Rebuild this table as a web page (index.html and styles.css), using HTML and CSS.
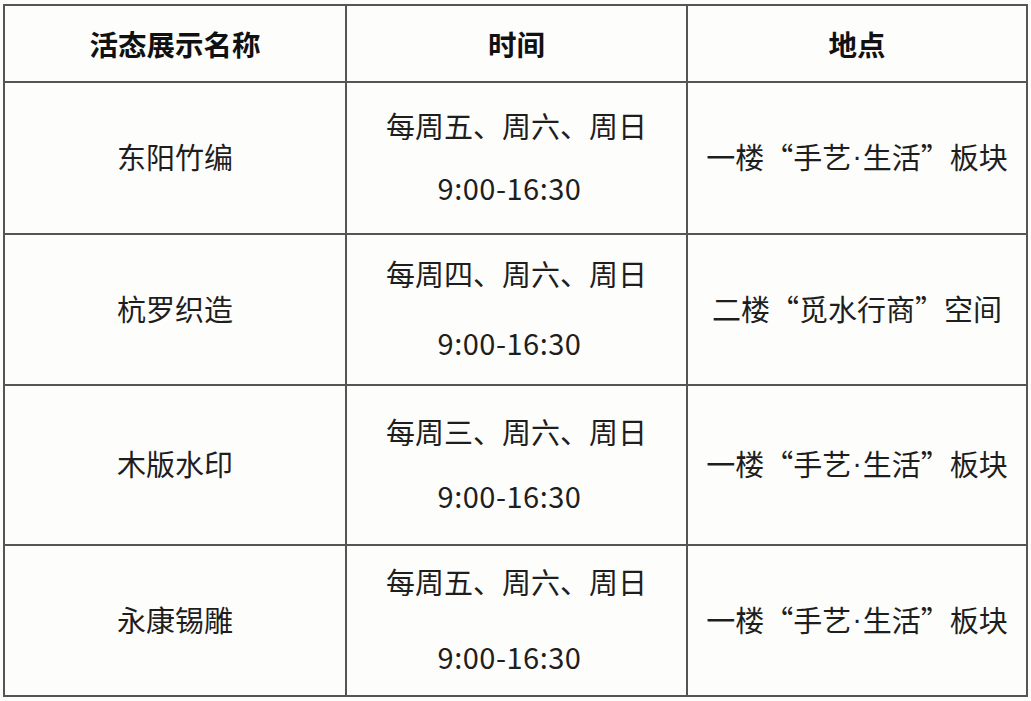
FILE: index.html
```html
<!DOCTYPE html>
<html lang="zh-CN">
<head>
<meta charset="utf-8">
<title>活态展示</title>
<link rel="stylesheet" href="styles.css">
</head>
<body>
<div class="table">
  <div class="cell head">活态展示名称</div>
  <div class="cell head">时间</div>
  <div class="cell head">地点</div>

  <div class="cell">东阳竹编</div>
  <div class="cell time gap-a"><span>每周五、周六、周日</span><span class="hours">9:00-16:30</span></div>
  <div class="cell">一楼“手艺<span class="dot">·</span>生活”板块</div>

  <div class="cell">杭罗织造</div>
  <div class="cell time gap-b"><span>每周四、周六、周日</span><span class="hours">9:00-16:30</span></div>
  <div class="cell">二楼“觅水行商”空间</div>

  <div class="cell">木版水印</div>
  <div class="cell time gap-c"><span>每周三、周六、周日</span><span class="hours">9:00-16:30</span></div>
  <div class="cell">一楼“手艺<span class="dot">·</span>生活”板块</div>

  <div class="cell">永康锡雕</div>
  <div class="cell time gap-d"><span>每周五、周六、周日</span><span class="hours">9:00-16:30</span></div>
  <div class="cell">一楼“手艺<span class="dot">·</span>生活”板块</div>
</div>
</body>
</html>
```

FILE: styles.css
```css
html, body {
  background: #fdfdfb;
}
body {
  margin: 4px 0 0 3px;
  font-family: "Noto Sans CJK SC", "Noto Sans", sans-serif;
  color: #1e1e1e;
}
.table {
  display: grid;
  grid-template-columns: 340px 339px 338px;
  grid-template-rows: 75px 150px 149px 158px 149px;
  gap: 2px;
  padding: 2px;
  width: max-content;
  background: #555555;
}
.cell {
  background: #fdfdfb;
  display: flex;
  flex-direction: row;
  align-items: center;
  justify-content: center;
  font-size: 29px;
  line-height: 34px;
  white-space: nowrap;
  padding-bottom: 4px;
}
.time {
  flex-direction: column;
}
.head {
  font-weight: bold;
  font-size: 28.5px;
  color: #111;
  padding-bottom: 0;
}
.hours {
  letter-spacing: 0.5px;
  padding-right: 14px;
}
.dot {
  font-family: "Liberation Sans", sans-serif;
  padding: 0 1px;
}
.gap-a { gap: 28px; }
.gap-b { gap: 35px; }
.gap-c { gap: 30px; }
.gap-d { gap: 41px; }
```
